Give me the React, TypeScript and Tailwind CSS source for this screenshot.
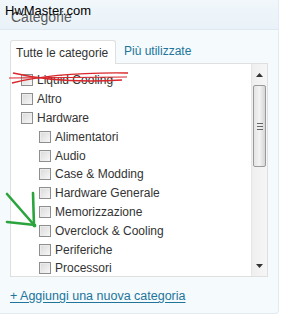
import React from "react";

const items: { label: string; indent: boolean }[] = [
  { label: "Liquid Cooling", indent: false },
  { label: "Altro", indent: false },
  { label: "Hardware", indent: false },
  { label: "Alimentatori", indent: true },
  { label: "Audio", indent: true },
  { label: "Case & Modding", indent: true },
  { label: "Hardware Generale", indent: true },
  { label: "Memorizzazione", indent: true },
  { label: "Overclock & Cooling", indent: true },
  { label: "Periferiche", indent: true },
  { label: "Processori", indent: true },
];

function Check() {
  return (
    <span className="block w-[12px] h-[12px] shrink-0 border border-[#8e8e8e] bg-gradient-to-br from-[#d9d9d9] to-[#f7f7f7] shadow-[inset_1px_1px_0_#ececec]" />
  );
}

export default function App() {
  return (
    <div
      className="relative w-[287px] h-[316px] bg-white overflow-hidden"
      style={{ fontFamily: '"Liberation Sans", Arial, sans-serif' }}
    >
      <div className="w-[279px] h-[314px] bg-[#f5fafd] border-r border-b border-[#e2ebf1] rounded-br-[4px] flex flex-col">
        <div className="h-[30px] border-b border-[#dde8ef] bg-gradient-to-b from-[#f1f7fb] to-[#e9f2f8] px-[11px] flex items-center">
          <span className="text-[14px] text-[#5a5a5a] leading-none mt-[5px]">Categorie</span>
        </div>
        <div className="px-[10px] pt-[9px]">
          <div className="flex items-end text-[12px] leading-[14px]">
            <div className="relative z-10 h-[24px] w-[106px] -mb-px bg-white border border-b-0 border-[#dfdfdf] rounded-t-[3px] flex items-center pl-[5px] text-[#333]">
              Tutte le categorie
            </div>
            <div className="h-[24px] pl-[8px] flex items-center text-[#21759b]">Più utilizzate</div>
          </div>
          <div className="h-[214px] w-[258px] border border-[#dfdfdf] bg-white flex">
            <div className="flex-1 overflow-hidden pt-[7px] pl-[10px] text-[12px] text-[#333]">
              {items.map((it) => (
                <div
                  key={it.label}
                  className={`h-[18.8px] flex items-center gap-[4px] ${it.indent ? "pl-[18px]" : ""}`}
                >
                  <Check />
                  <span className="leading-[14px]">{it.label}</span>
                </div>
              ))}
            </div>
            <div className="w-[16px] bg-gradient-to-r from-[#efefef] to-[#f6f6f6] border-l border-[#e6e6e6] flex flex-col">
              <div className="h-[21px] flex items-center justify-center">
                <svg width="7" height="4" viewBox="0 0 7 4">
                  <path d="M0 4 L3.5 0 L7 4 Z" fill="#333" />
                </svg>
              </div>
              <div className="h-[82px] mx-[1px] border border-[#9a9a9a] rounded-[2px] bg-gradient-to-r from-[#e4e4e4] via-[#f3f3f3] to-[#d6d6d6] flex flex-col items-center justify-center gap-[2px]">
                <span className="block w-[6px] h-px bg-[#666]" />
                <span className="block w-[6px] h-px bg-[#666]" />
                <span className="block w-[6px] h-px bg-[#666]" />
              </div>
              <div className="flex-1" />
              <div className="h-[21px] flex items-center justify-center">
                <svg width="7" height="4" viewBox="0 0 7 4">
                  <path d="M0 0 L7 0 L3.5 4 Z" fill="#333" />
                </svg>
              </div>
            </div>
          </div>
          <div className="mt-[12px] text-[12.5px] leading-[15px] text-[#21759b] underline underline-offset-[2px]">
            + Aggiungi una nuova categoria
          </div>
        </div>
      </div>

      <div className="absolute left-[5px] top-[3px] text-[13px] leading-[16px] text-black">HwMaster.com</div>

      <svg className="absolute left-0 top-0 pointer-events-none" width="287" height="316" viewBox="0 0 287 316">
        <path d="M12 83 Q 55 72 128 73" stroke="#d9262b" strokeWidth="1.4" fill="none" />
        <path d="M13 73 Q 60 84 122 80" stroke="#d9262b" strokeWidth="1.4" fill="none" />
        <path d="M9 78 L 127 77" stroke="#d9262b" strokeWidth="1.2" fill="none" />
        <path d="M7 194 L 35 226" stroke="#2ca43e" strokeWidth="2.6" fill="none" strokeLinecap="round" />
        <path d="M33 193 L 34 226" stroke="#2ca43e" strokeWidth="2.6" fill="none" strokeLinecap="round" />
        <path d="M7 222 L 35 225" stroke="#2ca43e" strokeWidth="2.6" fill="none" strokeLinecap="round" />
      </svg>
    </div>
  );
}
